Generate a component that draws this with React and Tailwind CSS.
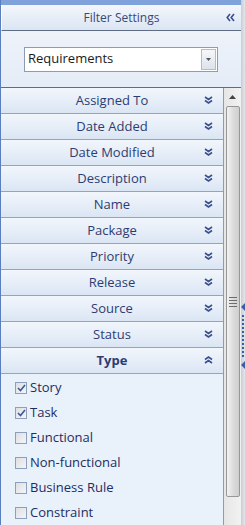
import { useState } from 'react'

/* ── Small glyphs ── */

function ChevronsDown() {
  return (
    <svg width="9" height="8" viewBox="0 0 9 8" className="text-[#3b4f8c]">
      <path d="M1 1 L4.5 3.5 L8 1 M1 4.5 L4.5 7 L8 4.5" fill="none" stroke="currentColor" strokeWidth="1.6" />
    </svg>
  )
}

function ChevronsUp() {
  return (
    <svg width="9" height="8" viewBox="0 0 9 8" className="text-[#3b4f8c]">
      <path d="M1 3.5 L4.5 1 L8 3.5 M1 7 L4.5 4.5 L8 7" fill="none" stroke="currentColor" strokeWidth="1.6" />
    </svg>
  )
}

function ChevronsLeft() {
  return (
    <svg width="9" height="9" viewBox="0 0 9 9" className="text-[#3b4f8c]">
      <path d="M4 1 L1.2 4.5 L4 8 M8 1 L5.2 4.5 L8 8" fill="none" stroke="currentColor" strokeWidth="1.6" />
    </svg>
  )
}

function Check({ checked, label, onToggle }) {
  return (
    <div className="h-[25px] flex items-center gap-[3px] pl-[14px] cursor-default" onClick={onToggle}>
      <div className="w-[12px] h-[12px] border border-[#8e9fbd] bg-gradient-to-br from-[#dcdfe4] to-[#f4f5f7] flex items-center justify-center">
        {checked && (
          <svg width="9" height="8" viewBox="0 0 9 8">
            <path d="M1 4 L3.5 6.5 L8 1" fill="none" stroke="#3a5a9a" strokeWidth="1.6" />
          </svg>
        )}
      </div>
      <span className="text-[13px] text-[#1e2d62]">{label}</span>
    </div>
  )
}

function FilterRow({ label, open }) {
  return (
    <div className="h-[26px] flex items-center pt-[1px] bg-gradient-to-b from-[#f2f6fc] to-[#dbe6f4] border-b border-[#95a3bb] relative">
      <span className={`flex-1 text-center text-[13px] text-[#2e3c72] ${open ? 'font-bold' : ''}`}>{label}</span>
      <span className="absolute right-[10px] top-[8px]">{open ? <ChevronsUp /> : <ChevronsDown />}</span>
    </div>
  )
}

const filters = [
  'Assigned To',
  'Date Added',
  'Date Modified',
  'Description',
  'Name',
  'Package',
  'Priority',
  'Release',
  'Source',
  'Status',
]

export default function App() {
  const [types, setTypes] = useState([
    { label: 'Story', checked: true },
    { label: 'Task', checked: true },
    { label: 'Functional', checked: false },
    { label: 'Non-functional', checked: false },
    { label: 'Business Rule', checked: false },
    { label: 'Constraint', checked: false },
  ])

  const toggle = (i) =>
    setTypes((t) => t.map((x, j) => (j === i ? { ...x, checked: !x.checked } : x)))

  return (
    <div className="w-[245px] h-[525px] flex overflow-hidden bg-[#e9f0f9]" style={{ fontFamily: '"Open Sans", "Noto Sans", sans-serif' }}>
      {/* main column */}
      <div className="w-[241px] flex flex-col border-l border-[#5a7fbf]">
        <div className="h-[5px] bg-[#7fa2da] shrink-0" />
        {/* header */}
        <div className="h-[26px] shrink-0 flex items-center pt-[1px] relative bg-gradient-to-b from-[#f4f7fc] to-[#dbe5f3] border-l border-white border-b border-b-[#5e6c84]">
          <span className="flex-1 text-center text-[12px] text-[#3b4876]">Filter Settings</span>
          <span className="absolute right-[6px] top-[8px]"><ChevronsLeft /></span>
        </div>
        {/* combo area */}
        <div className="h-[57px] shrink-0 flex items-center pl-[23px] pr-[23px] bg-gradient-to-b from-[#eef3fa] to-[#e4ecf7] border-b border-[#5e6c84]">
          <div className="w-[194px] h-[25px] bg-white border border-[#8d9bb5] flex items-center">
            <span className="flex-1 pl-[3px] text-[13px] text-[#1a1a1a]">Requirements</span>
            <div className="w-[15px] h-[21px] mr-[1px] border border-[#b0bccf] bg-gradient-to-b from-[#f5f7fa] to-[#dde3ec] flex items-center justify-center">
              <svg width="5" height="3" viewBox="0 0 5 3"><path d="M0 0 H5 L2.5 3 Z" fill="#555" /></svg>
            </div>
          </div>
        </div>
        {/* list + scrollbar */}
        <div className="flex-1 flex min-h-0">
          <div className="w-[223px] flex flex-col border-r border-[#8d9bb3]">
            {filters.map((f) => (
              <FilterRow key={f} label={f} />
            ))}
            <FilterRow label="Type" open />
            <div className="flex-1 bg-[#e9f1fa] pt-[1px]">
              {types.map((t, i) => (
                <Check key={t.label} label={t.label} checked={t.checked} onToggle={() => toggle(i)} />
              ))}
            </div>
          </div>
          {/* scrollbar */}
          <div className="w-[17px] flex flex-col items-center bg-gradient-to-r from-[#e6e6e6] to-[#f2f2f2]">
            <div className="h-[17px] w-full flex items-center justify-center">
              <svg width="7" height="4" viewBox="0 0 7 4"><path d="M0 4 L3.5 0 L7 4 Z" fill="#444" /></svg>
            </div>
            <div className="w-[14px] h-[391px] mt-[1px] rounded-[2px] border border-[#979797] bg-gradient-to-r from-[#f3f3f3] via-[#dcdcdc] to-[#cfcfcf] flex items-center justify-center">
              <div className="flex flex-col gap-[2px]">
                <div className="w-[8px] h-px bg-[#6c6c6c]" />
                <div className="w-[8px] h-px bg-[#6c6c6c]" />
                <div className="w-[8px] h-px bg-[#6c6c6c]" />
                <div className="w-[8px] h-px bg-[#6c6c6c]" />
              </div>
            </div>
          </div>
        </div>
      </div>
      {/* splitter */}
      <div className="w-[4px] flex flex-col items-center bg-gradient-to-r from-[#c9ccd1] to-[#e3e6ea] relative">
        <svg className="absolute left-0 top-[303px]" width="4" height="8" viewBox="0 0 4 8"><path d="M0 4 L4 0 V8 Z" fill="#3a5fa8" /></svg>
        <div className="absolute left-[1px] top-[315px] flex flex-col gap-[2px]">
          {Array.from({ length: 11 }).map((_, i) => (
            <div key={i} className="w-[2px] h-[2px] bg-[#3a5fa8]" />
          ))}
        </div>
        <svg className="absolute left-0 top-[361px]" width="4" height="8" viewBox="0 0 4 8"><path d="M0 4 L4 0 V8 Z" fill="#3a5fa8" /></svg>
      </div>
    </div>
  )
}
